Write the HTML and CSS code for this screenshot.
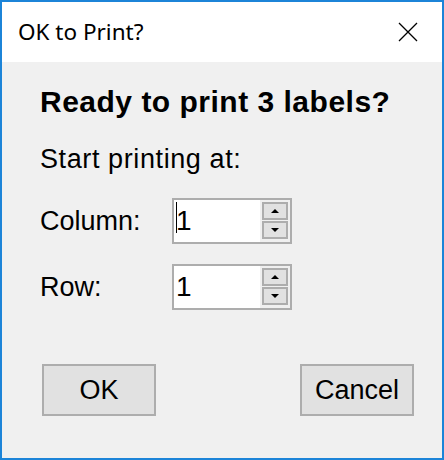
FILE: index.html
```html
<!DOCTYPE html>
<html>
<head>
<meta charset="utf-8">
<link rel="stylesheet" href="styles.css">
</head>
<body>
<div class="window">
  <div class="titlebar">
    <span class="title">OK to Print?</span>
    <span class="close">
      <svg width="20" height="20" viewBox="0 0 20 20"><path d="M1 1 L19 19 M19 1 L1 19" stroke="#000" stroke-width="1.3" fill="none"/></svg>
    </span>
  </div>
  <div class="content">
    <div class="heading">Ready to print 3 labels?</div>
    <div class="text">Start printing at:</div>
    <div class="field-row first">
      <div class="label">Column:</div>
      <div class="spin">
        <div class="spin-value"><span class="caret"></span><span class="num">1</span></div>
        <div class="spin-buttons">
          <div class="spin-btn"><span class="tri-up"></span></div>
          <div class="spin-btn"><span class="tri-down"></span></div>
        </div>
      </div>
    </div>
    <div class="field-row">
      <div class="label">Row:</div>
      <div class="spin">
        <div class="spin-value"><span class="num">1</span></div>
        <div class="spin-buttons">
          <div class="spin-btn"><span class="tri-up"></span></div>
          <div class="spin-btn"><span class="tri-down"></span></div>
        </div>
      </div>
    </div>
    <div class="buttons">
      <div class="btn">OK</div>
      <div class="btn">Cancel</div>
    </div>
  </div>
</div>
</body>
</html>
```
FILE: styles.css
```css
html, body {
  margin: 0;
  padding: 0;
}
body {
  font-family: "Liberation Sans", Arial, sans-serif;
  color: #000;
}
.window {
  box-sizing: border-box;
  width: 444px;
  height: 460px;
  border: 2px solid #1c84d8;
  background: #f0f0f0;
  display: flex;
  flex-direction: column;
}
.titlebar {
  height: 60px;
  background: #fff;
  display: flex;
  align-items: center;
  justify-content: space-between;
  padding: 0 24px 0 16px;
}
.title {
  font-family: "Noto Sans", "Open Sans", sans-serif;
  font-size: 22.5px;
  line-height: 30px;
}
.close {
  display: flex;
  width: 20px;
  height: 20px;
}
.content {
  flex: 1;
  padding: 23px 28px 0 38px;
}
.heading {
  font-weight: bold;
  font-size: 30px;
  letter-spacing: 0.5px;
  line-height: 34px;
}
.text {
  margin-top: 24px;
  font-size: 27px;
  letter-spacing: 0.6px;
  line-height: 32px;
}
.field-row {
  display: flex;
  align-items: center;
  margin-top: 20px;
}
.field-row.first {
  margin-top: 23px;
}
.label {
  width: 132px;
  font-size: 27px;
  line-height: 32px;
}
.spin {
  box-sizing: border-box;
  width: 120px;
  height: 46px;
  border: 2px solid #adadad;
  background: #fff;
  display: flex;
}
.spin-value {
  flex: 1;
  display: flex;
  align-items: center;
  padding-left: 2px;
  font-size: 28px;
  line-height: 32px;
  position: relative;
}
.caret {
  position: absolute;
  left: 2px;
  top: 2px;
  width: 1px;
  height: 31px;
  background: #000;
}
.spin-buttons {
  width: 30px;
  background: #f0f0f0;
  box-sizing: border-box;
  padding: 2px 2px 3px;
  display: flex;
  flex-direction: column;
  gap: 1px;
}
.spin-btn {
  box-sizing: border-box;
  height: 18px;
  border: 2px solid #adadad;
  background: #e1e1e1;
  display: flex;
  align-items: center;
  justify-content: center;
}
.tri-up {
  width: 0;
  height: 0;
  border-left: 4px solid transparent;
  border-right: 4px solid transparent;
  border-bottom: 4px solid #000;
}
.tri-down {
  width: 0;
  height: 0;
  border-left: 4px solid transparent;
  border-right: 4px solid transparent;
  border-top: 4px solid #000;
}
.buttons {
  display: flex;
  justify-content: space-between;
  margin-top: 54px;
  padding-left: 2px;
}
.btn {
  box-sizing: border-box;
  width: 114px;
  height: 52px;
  border: 2px solid #adadad;
  background: #e1e1e1;
  display: flex;
  align-items: center;
  justify-content: center;
  font-size: 27px;
  line-height: 32px;
}
```
